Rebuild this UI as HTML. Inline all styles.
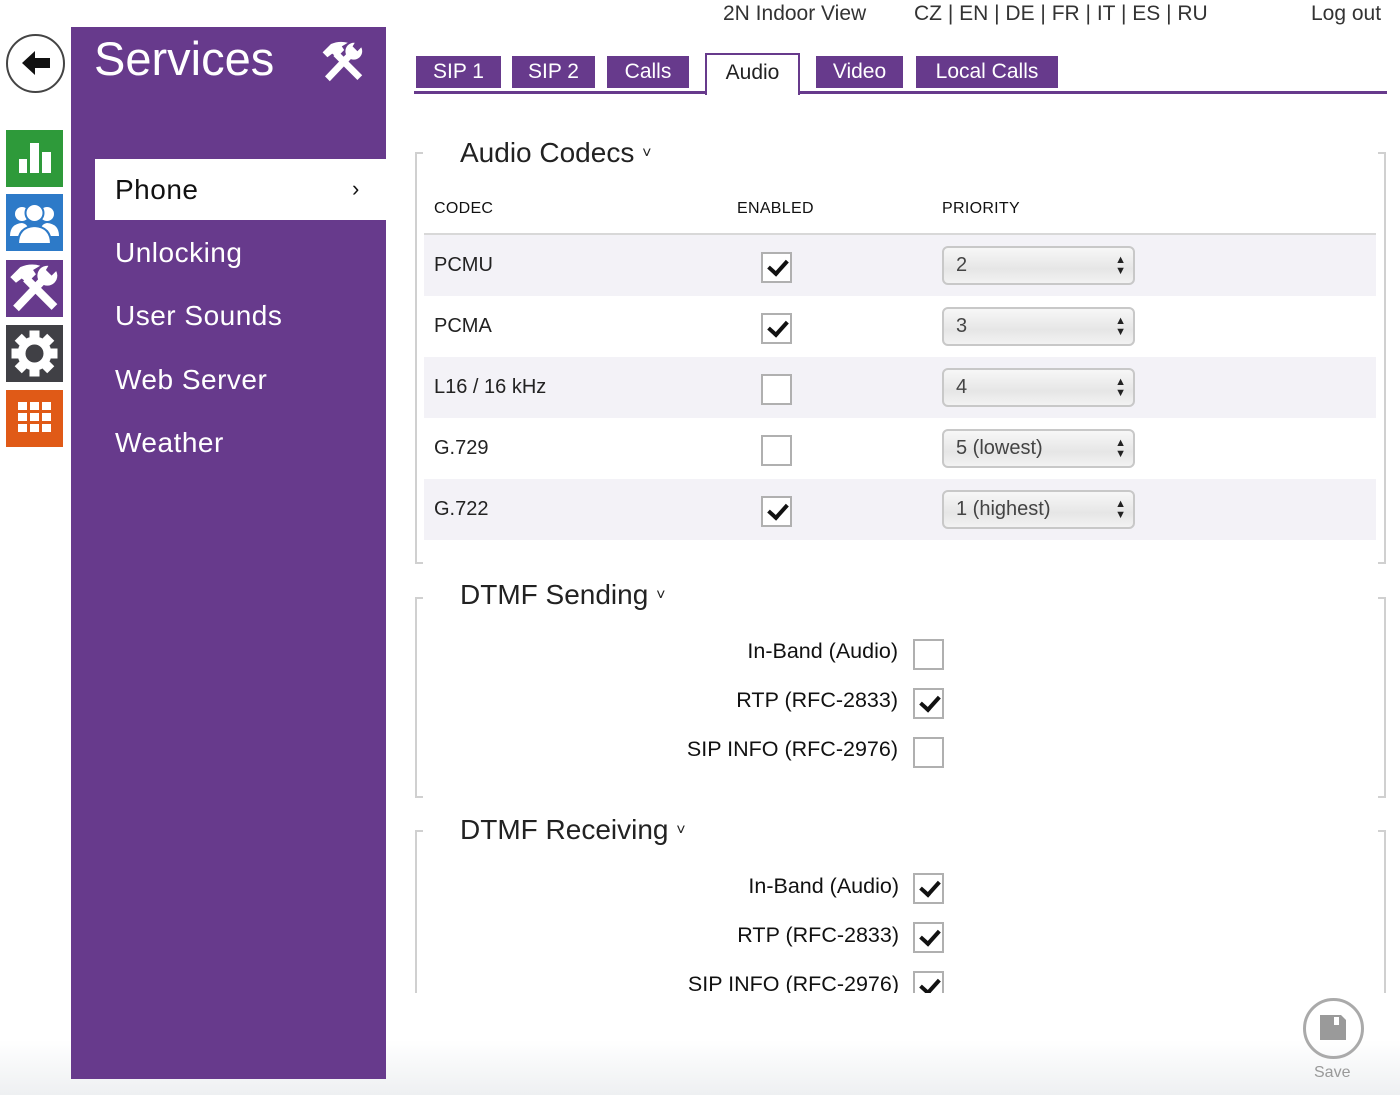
<!DOCTYPE html>
<html><head><meta charset="utf-8"><style>
*{margin:0;padding:0;box-sizing:border-box}
body{width:1400px;height:1095px;position:relative;overflow:hidden;background:linear-gradient(#fff 0,#fff 1040px,#eef0f2 1095px);font-family:"Liberation Sans",sans-serif;color:#222}
.a{position:absolute}
.p{background:#673a8c}
.tile{position:absolute;left:6px;width:57px;height:57px}
.nav{position:absolute;left:115px;color:#fff;font-size:28px;letter-spacing:.5px}
.top{position:absolute;top:2px;font-size:21px;color:#333}
.tab{position:absolute;top:56px;height:32px;background:#673a8c;color:#fff;font-size:21px;text-align:center;line-height:31px}
.row{position:absolute;left:424px;width:952px;height:61px}
.g{background:#f3f2f7}
.cl{position:absolute;left:10px;top:19px;font-size:20px;color:#222}
.cb{position:absolute;width:31px;height:31px;border:2px solid #b0b0b0;background:#fff}
.cb.on::after{content:"";position:absolute;left:9px;top:2px;width:8px;height:15px;border:solid #111;border-width:0 4px 4px 0;transform:rotate(42deg)}
.sel{position:absolute;left:518px;top:11px;width:193px;height:39px;border:2px solid #c8c8c8;border-radius:6px;background:linear-gradient(#f7f7f7,#e6e6e6 60%,#f2f2f2);font-size:20px;color:#444;padding:6px 0 0 12px}
.sel::after{content:"▲\A▼";white-space:pre;position:absolute;right:7px;top:7px;font-size:11px;line-height:11px;color:#222}
.fs{position:absolute;left:415px;width:971px;border-left:2px solid #d0d0d0;border-right:2px solid #d0d0d0}
.tick{position:absolute;width:8px;height:2px;background:#d0d0d0}
.leg{position:absolute;left:460px;font-size:28px;color:#222}
.lbl{position:absolute;right:502px;font-size:21.5px;color:#111;text-align:right;white-space:nowrap}
.hd{position:absolute;top:200px;font-size:16px;color:#111;letter-spacing:.3px}
</style></head><body>
<div class="a" style="left:6px;top:34px;width:59px;height:59px;border:2px solid #444;border-radius:50%"></div>
<svg class="a" style="left:20px;top:48px" width="32" height="30" viewBox="0 0 32 30"><path d="M2 15 L15 3 L15 10 L30 10 L30 20 L15 20 L15 27 Z" fill="#111"/></svg>
<div class="tile" style="top:130px;background:#2e9a3a"><svg width="57" height="57"><rect x="13" y="29" width="8" height="14" fill="#fff"/><rect x="24" y="13" width="9" height="30" fill="#fff"/><rect x="36" y="22" width="9" height="21" fill="#fff"/></svg></div>
<div class="tile" style="top:194px;background:#2d7ac8"><svg width="57" height="57" fill="#fff"><circle cx="16" cy="20" r="7"/><path d="M4 42 Q4 30 16 29 Q22 30 22 36 L22 42Z"/><circle cx="41" cy="20" r="7"/><path d="M53 42 Q53 30 41 29 Q35 30 35 36 L35 42Z"/><circle cx="28.5" cy="19" r="9" stroke="#2d7ac8" stroke-width="2"/><path d="M12 50 Q12 33 28.5 32 Q45 33 45 50Z" stroke="#2d7ac8" stroke-width="2"/></svg></div>
<div class="tile" style="top:260px;background:#673a8c"><svg width="57" height="57" viewBox="0 0 40 40"><g fill="#fff"><path d="M32 35 L36 31 L16 11 L12 15Z"/><path d="M3 12 L10 5 Q17 2 24 4 L19 7 L21 10 L15 16 L11 13 L7 16Z"/><path d="M5 32 L9 36 L28 16 L24 12Z"/><circle cx="29" cy="11" r="7"/></g><path d="M31 2 L36 7 L32 11 L28 7Z" fill="#673a8c"/></svg></div>
<div class="tile" style="top:325px;background:#404045"><svg width="57" height="57"><g fill="#fff" transform="translate(28.5 28.5)"><circle r="17"/><rect x="-5" y="-23" width="10" height="46"/><rect x="-23" y="-5" width="46" height="10"/><rect x="-5" y="-23" width="10" height="46" transform="rotate(45)"/><rect x="-5" y="-23" width="10" height="46" transform="rotate(-45)"/></g><circle cx="28.5" cy="28.5" r="9" fill="#404045"/></svg></div>
<div class="tile" style="top:390px;background:#e05a17"><svg width="57" height="57" fill="#fff"><rect x="12" y="12" width="9" height="8"/><rect x="24" y="12" width="9" height="8"/><rect x="36" y="12" width="9" height="8"/><rect x="12" y="23" width="9" height="8"/><rect x="24" y="23" width="9" height="8"/><rect x="36" y="23" width="9" height="8"/><rect x="12" y="34" width="9" height="8"/><rect x="24" y="34" width="9" height="8"/><rect x="36" y="34" width="9" height="8"/></svg></div>
<div class="a p" style="left:71px;top:27px;width:315px;height:1052px"></div>
<div class="a" style="left:94px;top:31px;color:#fff;font-size:47px">Services</div>
<svg class="a" style="left:318px;top:38px" width="50" height="48" viewBox="0 0 40 40"><g fill="#fff"><path d="M32 35 L36 31 L16 11 L12 15Z"/><path d="M3 12 L10 5 Q17 2 24 4 L19 7 L21 10 L15 16 L11 13 L7 16Z"/><path d="M5 32 L9 36 L28 16 L24 12Z"/><circle cx="29" cy="11" r="7"/></g><path d="M31 2 L36 7 L32 11 L28 7Z" fill="#673a8c"/></svg>
<div class="a" style="left:95px;top:159px;width:291px;height:61px;background:#fff"></div>
<div class="nav" style="top:174px;color:#111">Phone</div>
<div class="a" style="left:352px;top:176px;font-size:22px;color:#111">›</div>
<div class="nav" style="top:237px">Unlocking</div>
<div class="nav" style="top:300px">User Sounds</div>
<div class="nav" style="top:364px">Web Server</div>
<div class="nav" style="top:427px">Weather</div>
<div class="top" style="left:723px">2N Indoor View</div>
<div class="top" style="left:914px">CZ | EN | DE | FR | IT | ES | RU</div>
<div class="top" style="left:1311px">Log out</div>
<div class="a" style="left:414px;top:91px;width:973px;height:3px;background:#673a8c"></div>
<div class="tab" style="left:416px;width:85px">SIP 1</div>
<div class="tab" style="left:512px;width:83px">SIP 2</div>
<div class="tab" style="left:607px;width:82px">Calls</div>
<div class="a" style="left:705px;top:53px;width:95px;height:42px;border:2px solid #673a8c;border-bottom:none;background:#fff;font-size:21px;text-align:center;line-height:36px">Audio</div>
<div class="tab" style="left:816px;width:87px">Video</div>
<div class="tab" style="left:916px;width:142px">Local Calls</div>
<div class="fs" style="top:152px;height:412px"></div>
<div class="tick" style="left:415px;top:152px"></div><div class="tick" style="left:415px;top:562px"></div>
<div class="tick" style="left:1378px;top:152px"></div><div class="tick" style="left:1378px;top:562px"></div>
<div class="leg" style="top:137px">Audio Codecs <span style="font-size:16px;vertical-align:4px">˅</span></div>
<div class="hd" style="left:434px">CODEC</div>
<div class="hd" style="left:737px">ENABLED</div>
<div class="hd" style="left:942px">PRIORITY</div>
<div class="a" style="left:424px;top:233px;width:952px;height:2px;background:#d8d8d8"></div>
<div class="row g" style="top:235px"><div class="cl">PCMU</div><div class="cb on" style="left:337px;top:17px"></div><div class="sel">2</div></div>
<div class="row" style="top:296px"><div class="cl">PCMA</div><div class="cb on" style="left:337px;top:17px"></div><div class="sel">3</div></div>
<div class="row g" style="top:357px"><div class="cl">L16 / 16 kHz</div><div class="cb" style="left:337px;top:17px"></div><div class="sel">4</div></div>
<div class="row" style="top:418px"><div class="cl">G.729</div><div class="cb" style="left:337px;top:17px"></div><div class="sel">5 (lowest)</div></div>
<div class="row g" style="top:479px"><div class="cl">G.722</div><div class="cb on" style="left:337px;top:17px"></div><div class="sel">1 (highest)</div></div>
<div class="fs" style="top:597px;height:201px"></div>
<div class="tick" style="left:415px;top:597px"></div><div class="tick" style="left:415px;top:796px"></div>
<div class="tick" style="left:1378px;top:597px"></div><div class="tick" style="left:1378px;top:796px"></div>
<div class="leg" style="top:579px">DTMF Sending <span style="font-size:16px;vertical-align:4px">˅</span></div>
<div class="lbl" style="top:639px">In-Band (Audio)</div><div class="cb" style="left:913px;top:639px"></div>
<div class="lbl" style="top:688px">RTP (RFC-2833)</div><div class="cb on" style="left:913px;top:688px"></div>
<div class="lbl" style="top:737px">SIP INFO (RFC-2976)</div><div class="cb" style="left:913px;top:737px"></div>
<div class="a" style="left:415px;top:0;width:971px;height:993px;overflow:hidden">
<div class="fs" style="left:0;top:830px;height:300px"></div>
<div class="tick" style="left:0;top:830px"></div><div class="tick" style="left:963px;top:830px"></div>
<div class="leg" style="left:45px;top:814px">DTMF Receiving <span style="font-size:16px;vertical-align:4px">˅</span></div>
<div class="lbl" style="right:487px;top:874px">In-Band (Audio)</div><div class="cb on" style="left:498px;top:873px"></div>
<div class="lbl" style="right:487px;top:923px">RTP (RFC-2833)</div><div class="cb on" style="left:498px;top:922px"></div>
<div class="lbl" style="right:487px;top:972px">SIP INFO (RFC-2976)</div><div class="cb on" style="left:498px;top:971px"></div>
</div>
<div class="a" style="left:1303px;top:998px;width:61px;height:61px;border:3px solid #aaa;border-radius:50%"></div>
<svg class="a" style="left:1319px;top:1014px" width="28" height="27"><path d="M1 1 H22 L27 6 V26 H1Z" fill="#9a9a9a"/><rect x="15" y="3" width="5" height="8" fill="#fff"/></svg>
<div class="a" style="left:1314px;top:1064px;font-size:16px;color:#999">Save</div>
</body></html>
